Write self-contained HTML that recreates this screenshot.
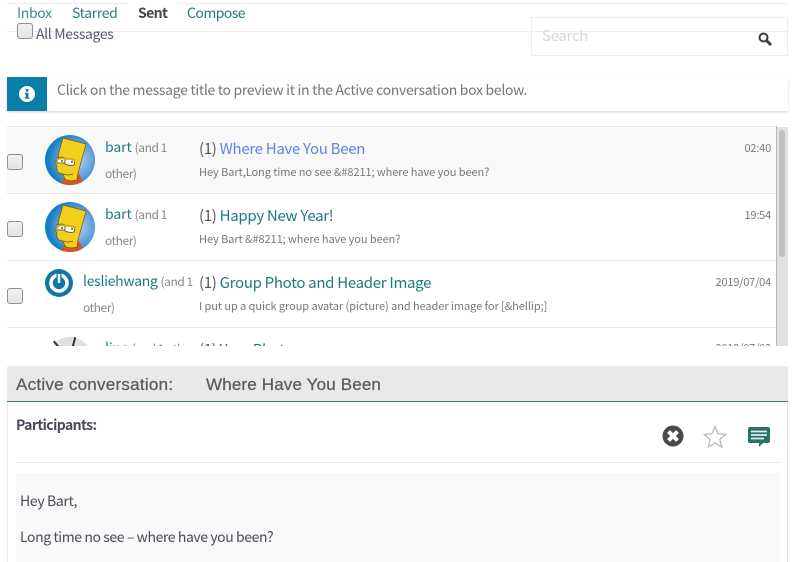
<!DOCTYPE html>
<html><head><meta charset="utf-8">
<style>
html,body{margin:0;padding:0;background:#fff;}
body{width:796px;height:562px;position:relative;overflow:hidden;font-family:"Noto Sans CJK SC","Liberation Sans",sans-serif;color:#555;}
.a{position:absolute;white-space:nowrap;}
.cb{position:absolute;width:14px;height:14px;border:1px solid #8f8f8f;border-radius:3px;background:linear-gradient(#f2f2f2,#e4e4e4);box-sizing:content-box;}
.t{color:#1f7a80;}
.row{position:absolute;left:7px;width:769px;height:67px;border-top:1px solid #e8e8e8;box-sizing:border-box;}
.f14{font-size:14px;line-height:20px;letter-spacing:-.35px;}
.f15{font-size:15px;line-height:20px;letter-spacing:-.3px;color:#555;}
.f12{font-size:12px;line-height:20px;letter-spacing:-.45px;color:#888;}
.f11{font-size:11px;line-height:20px;letter-spacing:-.07px;color:#777;}
.time{font-size:11px;line-height:20px;letter-spacing:-.2px;color:#777;}
.hd{font-family:'Liberation Sans',sans-serif;font-size:17px;line-height:20px;color:#5a5a5a;-webkit-text-stroke:.25px #5a5a5a;}
</style></head><body>
<div class="a" style="left:7px;top:3px;width:781px;height:1px;background:#eee"></div>
<div class="a" style="left:128px;top:0;width:49px;height:6px;background:#fff"></div>
<div class="a" style="left:7px;top:31px;width:781px;height:1px;background:#eee"></div>
<div class="a f14" style="left:17px;top:3px;color:#2a7f83;opacity:.9">Inbox</div>
<div class="a f14" style="left:72px;top:3px;color:#2a7f83">Starred</div>
<div class="a f14" style="left:138px;top:3px;font-weight:700;color:#444;letter-spacing:-.6px">Sent</div>
<div class="a f14" style="left:187px;top:3px;color:#1f7a80;letter-spacing:-.55px">Compose</div>
<div class="cb" style="left:17px;top:23px"></div>
<div class="a f14" style="left:36px;top:24px;color:#5a5a70">All Messages</div>

<div class="a" style="left:531px;top:17px;width:257px;height:39px;border:1px solid #eee;box-sizing:border-box"></div>
<div class="a" style="left:542px;top:26px;font-size:15px;line-height:20px;letter-spacing:-.3px;color:#d8d8d8">Search</div>
<svg class="a" style="left:757px;top:31px" width="16" height="16" viewBox="0 0 16 16"><circle cx="6.500" cy="6.500" r="4" fill="none" stroke="#3c3c3c" stroke-width="2"/><path d="M9.500 9.500L14 14" stroke="#3c3c3c" stroke-width="3"/></svg>

<div class="a" style="left:7px;top:77px;width:781px;height:34px;background:#fff;border-radius:2px;box-shadow:0 1px 2px rgba(0,0,0,.18)"></div>
<div class="a" style="left:7px;top:77px;width:40px;height:34px;background:#0a7ea6"></div>
<svg class="a" style="left:19px;top:86px" width="16" height="16" viewBox="0 0 16 16"><circle cx="8" cy="8" r="8" fill="#fff"/><rect x="6.800" y="3" width="2.600" height="2.600" fill="#0a7ea6"/><path d="M5.800 6.800h3.600v4.600h1.100v1.400H5.800v-1.400h1v-3.200h-1z" fill="#0a7ea6"/></svg>
<div class="a f14" style="left:57px;top:80px;color:#777;letter-spacing:-.31px">Click on the message title to preview it in the Active conversation box below.</div>

<div class="row" style="top:126px;background:#f9f9f9"></div>
<div class="row" style="top:193px"></div>
<div class="row" style="top:260px"></div>
<div class="row" style="top:327px"></div>

<div class="a" style="left:776px;top:126px;width:1px;height:220px;background:#bbb"></div>
<div class="a" style="left:777px;top:127px;width:11px;height:219px;background:#e0e0de"></div>
<div class="a" style="left:779px;top:130px;width:6px;height:127px;background:#bfc1bf;border-radius:3px"></div>

<div class="cb" style="left:7px;top:154px"></div>
<div class="cb" style="left:7px;top:221px"></div>
<div class="cb" style="left:7px;top:288px"></div>

<svg class="a" style="left:45px;top:135px" width="50" height="50" viewBox="0 0 50 50"><defs><radialGradient id="g" cx=".62" cy=".5" r=".55"><stop offset="0" stop-color="#b9d5ef"/><stop offset=".65" stop-color="#5f9edb"/><stop offset="1" stop-color="#1480bf"/></radialGradient><clipPath id="c"><circle cx="25" cy="25" r="25"/></clipPath></defs><g clip-path="url(#c)"><rect width="50" height="50" fill="url(#g)"/><path d="M17 44l17-5 6 11H18z" fill="#d2552a"/><path d="M18 3l23 6-8 29-1 7q-7 2-12-1l-2-5-4-1q-3-3-2-7l-2-4 3-4 1-6z" fill="#f3cf1c" stroke="#6b5a10" stroke-width=".7"/><path d="M12 23q4-2 8 0l0 5h-8z" fill="#fff" stroke="#444" stroke-width=".8"/><path d="M20 24q5-1 10 1l-1 5q-5 1-9-1z" fill="#fff" stroke="#444" stroke-width=".8"/><path d="M11 24q5-3 10-1 5-1 10 2l-1 2q-5-3-9-2-5-2-9 1z" fill="#d8ad14"/><circle cx="17" cy="26" r=".9" fill="#222"/><circle cx="27" cy="27" r=".9" fill="#222"/><path d="M18 39q5 2 10 0" fill="none" stroke="#6b5a10" stroke-width=".8"/></g></svg>
<svg class="a" style="left:45px;top:202px" width="50" height="50" viewBox="0 0 50 50"><g clip-path="url(#c)"><rect width="50" height="50" fill="url(#g)"/><path d="M17 44l17-5 6 11H18z" fill="#d2552a"/><path d="M18 3l23 6-8 29-1 7q-7 2-12-1l-2-5-4-1q-3-3-2-7l-2-4 3-4 1-6z" fill="#f3cf1c" stroke="#6b5a10" stroke-width=".7"/><path d="M12 23q4-2 8 0l0 5h-8z" fill="#fff" stroke="#444" stroke-width=".8"/><path d="M20 24q5-1 10 1l-1 5q-5 1-9-1z" fill="#fff" stroke="#444" stroke-width=".8"/><path d="M11 24q5-3 10-1 5-1 10 2l-1 2q-5-3-9-2-5-2-9 1z" fill="#d8ad14"/><circle cx="17" cy="26" r=".9" fill="#222"/><circle cx="27" cy="27" r=".9" fill="#222"/><path d="M18 39q5 2 10 0" fill="none" stroke="#6b5a10" stroke-width=".8"/></g></svg>
<svg class="a" style="left:45px;top:269px" width="28" height="28" viewBox="0 0 28 28"><circle cx="14" cy="14" r="14" fill="#0e76a8"/><circle cx="14" cy="14" r="8" fill="none" stroke="#fff" stroke-width="3.600"/><rect x="11.500" y="3" width="5" height="11" fill="#0e76a8"/><rect x="12.800" y="5" width="2.400" height="9" fill="#fff"/></svg>
<div class="a" style="left:48px;top:337px;width:44px;height:9px;overflow:hidden"><div style="width:44px;height:44px;border-radius:22px;background:#e0e0e0;position:relative"><div style="position:absolute;left:8px;top:3px;width:2px;height:10px;background:#333;transform:rotate(-40deg)"></div><div style="position:absolute;left:25px;top:0;width:2px;height:10px;background:#333;transform:rotate(15deg)"></div></div></div>

<div class="a t" style="left:105px;top:137px;font-size:14px;line-height:20px;letter-spacing:-.1px">bart <span class="f12">(and 1</span></div>
<div class="a f12" style="left:105px;top:164px">other)</div>
<div class="a t" style="left:105px;top:204px;font-size:14px;line-height:20px;letter-spacing:-.1px">bart <span class="f12">(and 1</span></div>
<div class="a f12" style="left:105px;top:231px">other)</div>
<div class="a t" style="left:83px;top:271px;font-size:14px;line-height:20px;letter-spacing:-.28px">lesliehwang <span class="f12">(and 1</span></div>
<div class="a f12" style="left:83px;top:298px">other)</div>
<div class="a" style="left:105px;top:337px;width:88px;height:9px;overflow:hidden"><div class="t" style="font-size:14px;line-height:20px;letter-spacing:-.1px;margin-top:1px">lina <span class="f12">(and 1 other)</span></div></div>

<div class="a f15" style="left:199px;top:139px">(1) <span style="color:#5b86e0">Where Have You Been</span></div>
<div class="a f11" style="left:199px;top:162px">Hey Bart,Long time no see &amp;#8211; where have you been?</div>
<div class="a f15" style="left:199px;top:206px">(1) <span class="t">Happy New Year!</span></div>
<div class="a f11" style="left:199px;top:229px">Hey Bart &amp;#8211; where have you been?</div>
<div class="a f15" style="left:199px;top:273px">(1) <span class="t">Group Photo and Header Image</span></div>
<div class="a f11" style="left:199px;top:296px">I put up a quick group avatar (picture) and header image for [&amp;hellip;]</div>
<div class="a" style="left:199px;top:337px;width:200px;height:9px;overflow:hidden"><div class="f15" style="margin-top:3px">(1) <span class="t">Your Photo</span></div></div>

<div class="a time" style="right:25px;top:138px">02:40</div>
<div class="a time" style="right:25px;top:205px">19:54</div>
<div class="a time" style="right:25px;top:272px">2019/07/04</div>
<div class="a" style="right:25px;top:337px;height:9px;overflow:hidden"><div class="time" style="margin-top:1px">2019/07/03</div></div>

<div class="a" style="left:7px;top:366px;width:781px;height:36px;background:#e9e9e9;border-bottom:1px solid #4f7f78;box-sizing:border-box;border-radius:2px 2px 0 0"></div>
<div class="a hd" style="left:16px;top:375px;letter-spacing:.26px">Active conversation:</div>
<div class="a hd" style="left:206px;top:375px;letter-spacing:.16px">Where Have You Been</div>
<div class="a" style="left:7px;top:402px;width:1px;height:160px;background:#e8e8e8"></div>
<div class="a" style="left:787px;top:402px;width:1px;height:160px;background:#e8e8e8"></div>
<div class="a f14" style="left:16px;top:415px;font-weight:700;color:#4a4a5a;letter-spacing:-.6px">Participants:</div>
<div class="a" style="left:16px;top:462px;width:764px;height:1px;background:#e8e8e8"></div>

<svg class="a" style="left:662px;top:425px" width="22" height="22" viewBox="0 0 22 22"><circle cx="11" cy="11" r="10.500" fill="#4a4a4a"/><path d="M6.500 6.500l9 9M15.500 6.500l-9 9" stroke="#fff" stroke-width="4"/></svg>
<svg class="a" style="left:703px;top:425px" width="24" height="23" viewBox="0 0 24 23"><path d="M12 1.500l3 7.300 7.800.6-6 5 1.900 7.600L12 18l-6.700 4 1.900-7.600-6-5 7.800-.6z" fill="#fff" stroke="#b5b5b5" stroke-width="1.200"/></svg>
<svg class="a" style="left:748px;top:427px" width="22" height="21" viewBox="0 0 22 21"><path d="M2 0h18a2 2 0 0 1 2 2v12a2 2 0 0 1-2 2h-5l-4 4v-4H2a2 2 0 0 1-2-2V2a2 2 0 0 1 2-2z" fill="#2b7268"/><path d="M3 4.500h16M3 8h16M3 11.500h13" stroke="#dfeeea" stroke-width="1.700"/></svg>

<div class="a" style="left:16px;top:473px;width:764px;height:89px;background:#f9f9f9"></div>
<div class="a f14" style="left:20px;top:491px;color:#4a4a5a">Hey Bart,</div>
<div class="a f14" style="left:20px;top:527px;color:#4a4a5a;letter-spacing:-.41px">Long time no see – where have you been?</div>
</body></html>
